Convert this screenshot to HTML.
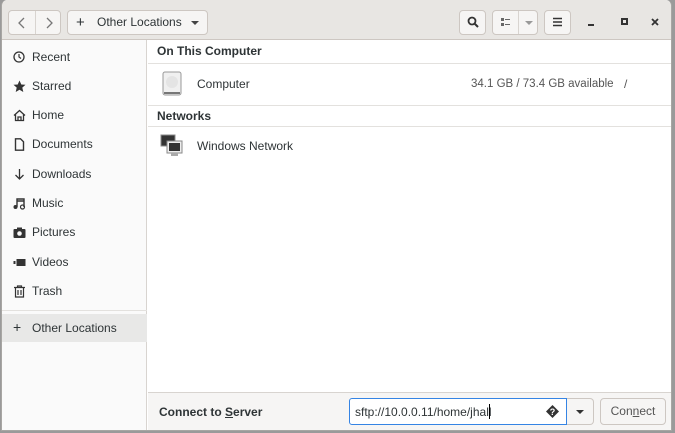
<!DOCTYPE html>
<html><head><style>
*{box-sizing:border-box;margin:0;padding:0}
body{width:675px;height:433px;background:#9a9a9a;font-family:"Liberation Sans",sans-serif;font-size:12px;color:#2e3436;position:relative;overflow:hidden}
#win{position:absolute;left:1px;top:0;width:671px;height:431px;background:#fff;border:1px solid #a8a6a3;border-top:none;border-radius:6px 6px 0 0;overflow:hidden}
#hdr{position:absolute;left:0;top:0;width:100%;height:40px;background:#e8e6e3;border-bottom:1px solid #cdc7c2}
.btn{position:absolute;top:10px;height:25px;background:#f6f5f4;border:1px solid #cdc7c2;border-radius:4px}
#side{position:absolute;left:0;top:40px;width:145px;height:391px;background:#fafafa;border-right:1px solid #d8d4d0}
.si{position:absolute;left:0;width:145px;height:29px;line-height:29px;padding-left:30px;font-size:12px}
.si svg{position:absolute;left:11px;top:8px}
.sec{position:absolute;left:146px;width:525px;font-weight:bold;font-size:12px;padding-left:9px;border-bottom:1px solid #e3e1de}
.row{position:absolute;left:146px;width:525px;height:40px;line-height:40px;padding-left:49px;font-size:12px}
#bot{position:absolute;left:146px;top:392px;width:525px;height:39px;background:#f6f5f4;border-top:1px solid #d8d4d0}
</style></head><body>
<div id="win">
<div id="hdr">
 <div class="btn" style="left:6px;width:53px"><div style="position:absolute;left:26px;top:0;width:1px;height:23px;background:#d8d4d0"></div>
 <svg style="position:absolute;left:8px;top:6px" width="10" height="12"><path d="M7 1L2 6L7 11" stroke="#777" stroke-width="1.3" fill="none"/></svg>
 <svg style="position:absolute;left:35px;top:6px" width="10" height="12"><path d="M3 1L8 6L3 11" stroke="#777" stroke-width="1.3" fill="none"/></svg></div>
 <div class="btn" style="left:65px;width:141px"><span style="position:absolute;left:8px;top:3px;font-size:15px">+</span><span style="position:absolute;left:29px;top:4px;font-size:12px">Other Locations</span><svg style="position:absolute;left:123px;top:10px" width="8" height="5"><path d="M0 0H8L4 4Z" fill="#444"/></svg></div>
 <div class="btn" style="left:457px;width:27px"><svg style="position:absolute;left:7px;top:5px" width="13" height="13"><circle cx="5" cy="5" r="3.5" stroke="#333" stroke-width="1.8" fill="none"/><path d="M7.5 7.5L11 11" stroke="#333" stroke-width="2"/></svg></div>
 <div class="btn" style="left:490px;width:46px"><div style="position:absolute;left:25px;top:0;width:1px;height:23px;background:#d8d4d0"></div>
 <svg style="position:absolute;left:8px;top:7px" width="10" height="9"><rect x="0" y="0" width="3" height="3" fill="#666"/><rect x="0" y="5" width="3" height="3" fill="#666"/><rect x="4" y="1" width="5" height="1" fill="#666"/><rect x="4" y="6" width="5" height="1" fill="#666"/></svg>
 <svg style="position:absolute;left:32px;top:10px" width="8" height="5"><path d="M0 0H8L4 4Z" fill="#999"/></svg></div>
 <div class="btn" style="left:542px;width:27px"><svg style="position:absolute;left:7px;top:6px" width="12" height="10"><path d="M1 1.5H10M1 5H10M1 8.5H10" stroke="#333" stroke-width="1.4"/></svg></div>
 <div style="position:absolute;left:586px;top:24px;width:6px;height:2px;background:#333"></div>
 <div style="position:absolute;left:619px;top:18px;width:7px;height:7px;border:2px solid #333"></div>
 <svg style="position:absolute;left:649px;top:18px" width="8" height="8"><path d="M1 1L7 7M7 1L1 7" stroke="#333" stroke-width="1.8"/></svg>
</div>
<div id="side">
 <div class="si" style="top:3px"><svg width="13" height="13"><circle cx="6" cy="6" r="5" stroke="#333" stroke-width="1.3" fill="none"/><path d="M6 3V6L8 7.5" stroke="#333" stroke-width="1.2" fill="none"/></svg>Recent</div>
 <div class="si" style="top:32px"><svg width="13" height="13"><path d="M6.5 0.5L8.3 4.5L12.5 4.8L9.3 7.6L10.3 12L6.5 9.7L2.7 12L3.7 7.6L0.5 4.8L4.7 4.5Z" fill="#333"/></svg>Starred</div>
 <div class="si" style="top:61px"><svg width="13" height="13"><path d="M1 6.5L6.5 1.5L12 6.5M2.5 5.5V11.5H10.5V5.5M5 11.5V8H8V11.5" stroke="#333" stroke-width="1.3" fill="none"/></svg>Home</div>
 <div class="si" style="top:90px"><svg width="13" height="13"><path d="M2.5 0.8H7.5L10.5 3.8V12.2H2.5Z" stroke="#333" stroke-width="1.4" fill="none"/></svg>Documents</div>
 <div class="si" style="top:120px"><svg width="13" height="13"><path d="M6.5 1V11M2.5 7L6.5 11L10.5 7" stroke="#333" stroke-width="1.3" fill="none"/></svg>Downloads</div>
 <div class="si" style="top:149px"><svg width="13" height="13"><path d="M4 10V2H11V10M4 4H11" stroke="#333" stroke-width="1.4" fill="none"/><circle cx="2.5" cy="10" r="2" fill="#333"/><circle cx="9.5" cy="10" r="2" fill="none" stroke="#333" stroke-width="1.2"/></svg>Music</div>
 <div class="si" style="top:178px"><svg width="13" height="13"><rect x="0.5" y="3" width="12" height="9" rx="1" fill="#333"/><rect x="4" y="1.5" width="5" height="2" fill="#333"/><circle cx="6.5" cy="7.5" r="2.3" fill="#fafafa"/></svg>Pictures</div>
 <div class="si" style="top:208px"><svg width="13" height="13"><rect x="0.5" y="5" width="2" height="3" fill="#333"/><rect x="3.5" y="3" width="9" height="7" fill="#333"/></svg>Videos</div>
 <div class="si" style="top:237px"><svg width="13" height="13"><path d="M1 2.5H12M4.5 2.5V1H8.5V2.5M2.5 3V12H10.5V3M5 5V10M8 5V10" stroke="#333" stroke-width="1.2" fill="none"/></svg>Trash</div>
 <div style="position:absolute;left:0;top:270px;width:145px;height:1px;background:#e3e1de"></div>
 <div class="si" style="top:274px;height:28px;line-height:28px;background:#e8e8e7"><span style="position:absolute;left:11px;top:-1px;font-size:14px">+</span>Other Locations</div>
</div>
<div class="sec" style="top:40px;height:24px;line-height:22px">On This Computer</div>
<div class="row" style="top:64px">Computer
 <svg style="position:absolute;left:14px;top:7px" width="22" height="26"><rect x="1" y="1" width="18" height="23" rx="2" fill="#f0f0f0" stroke="#999"/><circle cx="10" cy="11" r="6" fill="#e4e4e4"/><rect x="2" y="21" width="16" height="2" fill="#777"/></svg>
 <span style="position:absolute;left:323px;top:0;color:#555;font-size:11.5px">34.1 GB / 73.4 GB available</span><span style="position:absolute;left:476px;top:0;color:#555">/</span></div>
<div class="sec" style="top:105px;height:22px;line-height:20px;border-top:1px solid #e3e1de">Networks</div>
<div class="row" style="top:126px">Windows Network
 <svg style="position:absolute;left:12px;top:8px" width="24" height="24"><rect x="1" y="1" width="14" height="11" fill="#333" stroke="#888"/><rect x="7" y="7" width="15" height="12" fill="#eee" stroke="#888"/><rect x="9" y="9" width="11" height="8" fill="#333"/><rect x="11" y="19" width="7" height="3" fill="#aaa"/></svg></div>
<div id="bot">
 <span style="position:absolute;left:11px;top:12px;font-weight:bold">Connect to <u>S</u>erver</span>
 <div style="position:absolute;left:201px;top:5px;width:218px;height:27px;border:1px solid #3584e4;background:#fff;border-radius:3px 0 0 3px"><span style="position:absolute;left:5px;top:6px">sftp://10.0.0.11/home/jhall</span><span style="position:absolute;left:139px;top:5px;width:1px;height:15px;background:#000"></span><svg style="position:absolute;left:196px;top:6px" width="13" height="13"><path d="M6.5 0L13 6.5L6.5 13L0 6.5Z" fill="#333"/><text x="6.5" y="10" font-size="9" font-weight="bold" fill="#fff" text-anchor="middle" font-family="Liberation Sans">?</text></svg></div>
 <div style="position:absolute;left:419px;top:5px;width:27px;height:27px;border:1px solid #cdc7c2;border-left:none;background:#f6f5f4;border-radius:0 4px 4px 0"><svg style="position:absolute;left:9px;top:11px" width="8" height="5"><path d="M0 0H8L4 4Z" fill="#333"/></svg></div>
 <div style="position:absolute;left:452px;top:5px;width:66px;height:27px;border:1px solid #cdc7c2;background:#f6f5f4;border-radius:4px;text-align:center;line-height:25px;color:#555">Con<u>n</u>ect</div>
</div>
</div>
</body></html>
